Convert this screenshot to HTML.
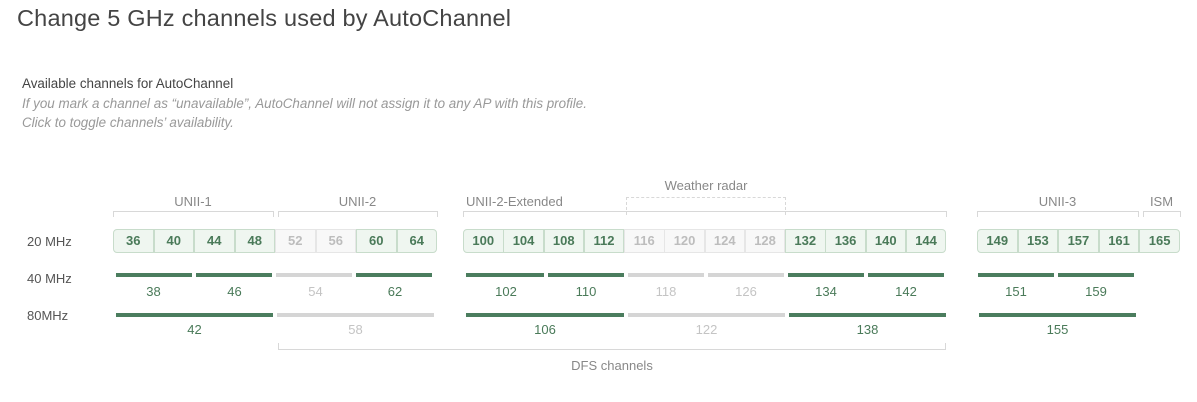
<!DOCTYPE html>
<html><head><meta charset="utf-8"><style>
body{margin:0;width:1197px;height:402px;background:#fff;font-family:"Liberation Sans",sans-serif;position:relative;overflow:hidden}
.a{position:absolute}
.t{left:17px;top:5px;font-size:23.5px;color:#444;font-weight:300;letter-spacing:0.2px}
.s{left:22px;top:76px;font-size:13.4px;color:#444}
.i{left:22px;font-size:13.4px;color:#999;font-style:italic}
.rl{left:27px;font-size:13px;color:#555}
.c{position:absolute;top:229px;height:24px;width:40.5px;box-sizing:border-box;border:1px solid #c8dccb;background:#eff6f0;color:#4a7a59;font-weight:bold;font-size:13px;text-align:center;line-height:22px}
.c.d{background:#f8f8f8;border-color:#e6e6e6;color:#bdbdbd}
.b{position:absolute;height:4px;background:#4b7d5e}
.b.g{background:#d5d5d5}
.l{position:absolute;font-size:13px;color:#4a7a59;text-align:center}
.l.g{color:#c4c4c4}
.br{position:absolute;border:1px solid #d8d8d8;border-bottom:none;height:5px}
.hl{position:absolute;font-size:13px;color:#888;text-align:center}
</style></head><body>
<div class="a t">Change 5 GHz channels used by AutoChannel</div>
<div class="a s">Available channels for AutoChannel</div>
<div class="a i" style="top:96px">If you mark a channel as “unavailable”, AutoChannel will not assign it to any AP with this profile.</div>
<div class="a i" style="top:115px">Click to toggle channels’ availability.</div>

<div class="a rl" style="top:234px">20 MHz</div>
<div class="a rl" style="top:271px">40 MHz</div>
<div class="a rl" style="top:308px">80MHz</div>

<div class="hl" style="left:113px;width:160px;top:194px">UNII-1</div>
<div class="br" style="left:113px;width:159px;top:211px"></div>
<div class="hl" style="left:278px;width:159px;top:194px">UNII-2</div>
<div class="br" style="left:278px;width:158px;top:211px"></div>
<div class="hl" style="left:466px;top:194px">UNII-2-Extended</div>
<div class="br" style="left:463px;width:482px;top:211px"></div>
<div class="hl" style="left:626px;width:160px;top:178px">Weather radar</div>
<div class="a" style="left:626px;top:197px;width:158px;height:17px;border:1px dashed #d8d8d8;border-bottom:none"></div>
<div class="hl" style="left:977px;width:161px;top:194px">UNII-3</div>
<div class="br" style="left:977px;width:160px;top:211px"></div>
<div class="hl" style="left:1143px;width:37px;top:194px">ISM</div>
<div class="br" style="left:1143px;width:36px;top:211px"></div>

<div class="c" style="left:113px;border-radius:4px 0 0 4px">36</div>
<div class="c" style="left:153.5px">40</div>
<div class="c" style="left:194px">44</div>
<div class="c" style="left:234.5px">48</div>
<div class="c d" style="left:275px">52</div>
<div class="c d" style="left:315.5px">56</div>
<div class="c" style="left:356px">60</div>
<div class="c" style="left:396.5px;border-radius:0 4px 4px 0">64</div>

<div class="c" style="left:463px;border-radius:4px 0 0 4px">100</div>
<div class="c" style="left:503.3px">104</div>
<div class="c" style="left:543.5px">108</div>
<div class="c" style="left:583.8px">112</div>
<div class="c d" style="left:624px">116</div>
<div class="c d" style="left:664.3px">120</div>
<div class="c d" style="left:704.5px">124</div>
<div class="c d" style="left:744.8px">128</div>
<div class="c" style="left:785px">132</div>
<div class="c" style="left:825.3px">136</div>
<div class="c" style="left:865.5px">140</div>
<div class="c" style="left:905.8px;border-radius:0 4px 4px 0">144</div>

<div class="c" style="left:977px;border-radius:4px 0 0 4px">149</div>
<div class="c" style="left:1017.6px">153</div>
<div class="c" style="left:1058.2px">157</div>
<div class="c" style="left:1098.8px">161</div>
<div class="c" style="left:1139.4px;border-radius:0 4px 4px 0">165</div>

<div class="b" style="left:116px;width:76px;top:273px"></div><div class="l" style="left:113px;width:81px;top:284px">38</div>
<div class="b" style="left:196px;width:76px;top:273px"></div><div class="l" style="left:194px;width:81px;top:284px">46</div>
<div class="b g" style="left:276px;width:76px;top:273px"></div><div class="l g" style="left:275px;width:81px;top:284px">54</div>
<div class="b" style="left:356px;width:76px;top:273px"></div><div class="l" style="left:356px;width:78px;top:284px">62</div>

<div class="b" style="left:466px;width:78px;top:273px"></div><div class="l" style="left:466px;width:80px;top:284px">102</div>
<div class="b" style="left:548px;width:76px;top:273px"></div><div class="l" style="left:546px;width:80px;top:284px">110</div>
<div class="b g" style="left:628px;width:76px;top:273px"></div><div class="l g" style="left:626px;width:80px;top:284px">118</div>
<div class="b g" style="left:708px;width:76px;top:273px"></div><div class="l g" style="left:706px;width:80px;top:284px">126</div>
<div class="b" style="left:788px;width:76px;top:273px"></div><div class="l" style="left:786px;width:80px;top:284px">134</div>
<div class="b" style="left:868px;width:76px;top:273px"></div><div class="l" style="left:866px;width:80px;top:284px">142</div>

<div class="b" style="left:978px;width:76px;top:273px"></div><div class="l" style="left:976px;width:80px;top:284px">151</div>
<div class="b" style="left:1058px;width:76px;top:273px"></div><div class="l" style="left:1056px;width:80px;top:284px">159</div>

<div class="b" style="left:116px;width:157px;top:313px"></div><div class="l" style="left:116px;width:157px;top:322px">42</div>
<div class="b g" style="left:277px;width:157px;top:313px"></div><div class="l g" style="left:277px;width:157px;top:322px">58</div>
<div class="b" style="left:466px;width:158px;top:313px"></div><div class="l" style="left:466px;width:158px;top:322px">106</div>
<div class="b g" style="left:628px;width:157px;top:313px"></div><div class="l g" style="left:628px;width:157px;top:322px">122</div>
<div class="b" style="left:789px;width:157px;top:313px"></div><div class="l" style="left:789px;width:157px;top:322px">138</div>
<div class="b" style="left:979px;width:157px;top:313px"></div><div class="l" style="left:979px;width:157px;top:322px">155</div>

<div class="a" style="left:278px;top:343px;width:666px;height:6px;border:1px solid #d8d8d8;border-top:none"></div>
<div class="hl" style="left:278px;width:668px;top:358px">DFS channels</div>
</body></html>
